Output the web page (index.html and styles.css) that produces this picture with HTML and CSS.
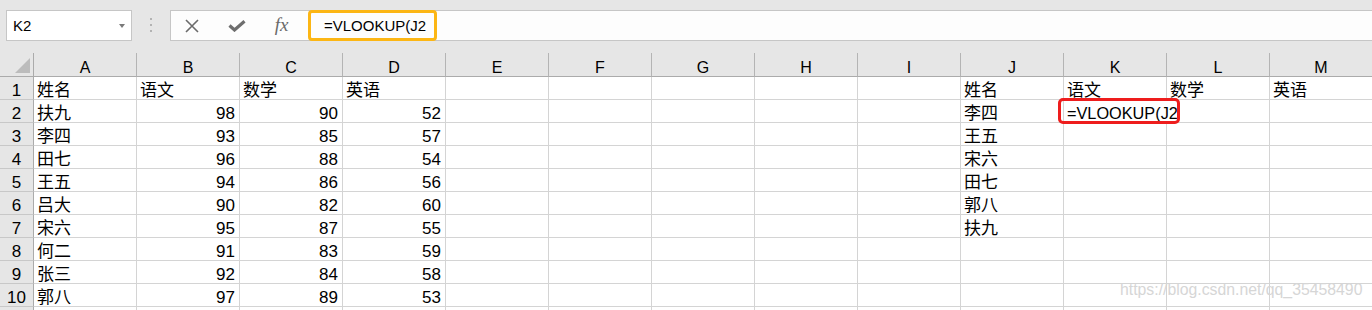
FILE: index.html
```html
<!DOCTYPE html>
<html>
<head>
	<meta charset="utf-8">
	<title>VLOOKUP</title>
	<link rel="stylesheet" href="styles.css">
</head>
<body>
	<div class="topbar">
		<div class="namebox"><span>K2</span><i class="caret"></i></div>
		<div class="grip"><i></i><i></i><i></i></div>
		<div class="fbar">
			<span class="fbtn">
				<svg width="14" height="14" viewBox="0 0 14 14"><path d="M1 1 L13 13 M13 1 L1 13" stroke="#6b6b6b" stroke-width="1.6" fill="none"/></svg>
			</span>
			<span class="fbtn">
				<svg width="18" height="12" viewBox="0 0 18 12"><path d="M1.5 5.5 L6.5 10 L16.5 1.2" stroke="#6e6e6e" stroke-width="3.2" fill="none"/></svg>
			</span>
			<span class="fbtn fx">fx</span>
			<span class="ftext">=VLOOKUP(J2</span>
		</div>
	</div>

	<div class="sheet">
		<div class="row head">
			<div class="corner"><i></i></div>
			<div>A</div><div>B</div><div>C</div><div>D</div><div>E</div><div>F</div><div>G</div>
			<div>H</div><div>I</div><div>J</div><div>K</div><div>L</div><div>M</div>
		</div>
		<div class="row">
			<div class="rh">1</div>
			<div>姓名</div><div>语文</div><div>数学</div><div>英语</div>
			<div></div><div></div><div></div><div></div><div></div>
			<div>姓名</div><div>语文</div><div>数学</div><div>英语</div>
		</div>
		<div class="row">
			<div class="rh">2</div>
			<div>扶九</div><div class="n">98</div><div class="n">90</div><div class="n">52</div>
			<div></div><div></div><div></div><div></div><div></div>
			<div>李四</div><div class="k2">=VLOOKUP(J2<span class="mark"></span></div><div></div><div></div>
		</div>
		<div class="row">
			<div class="rh">3</div>
			<div>李四</div><div class="n">93</div><div class="n">85</div><div class="n">57</div>
			<div></div><div></div><div></div><div></div><div></div>
			<div>王五</div><div></div><div></div><div></div>
		</div>
		<div class="row">
			<div class="rh">4</div>
			<div>田七</div><div class="n">96</div><div class="n">88</div><div class="n">54</div>
			<div></div><div></div><div></div><div></div><div></div>
			<div>宋六</div><div></div><div></div><div></div>
		</div>
		<div class="row">
			<div class="rh">5</div>
			<div>王五</div><div class="n">94</div><div class="n">86</div><div class="n">56</div>
			<div></div><div></div><div></div><div></div><div></div>
			<div>田七</div><div></div><div></div><div></div>
		</div>
		<div class="row">
			<div class="rh">6</div>
			<div>吕大</div><div class="n">90</div><div class="n">82</div><div class="n">60</div>
			<div></div><div></div><div></div><div></div><div></div>
			<div>郭八</div><div></div><div></div><div></div>
		</div>
		<div class="row">
			<div class="rh">7</div>
			<div>宋六</div><div class="n">95</div><div class="n">87</div><div class="n">55</div>
			<div></div><div></div><div></div><div></div><div></div>
			<div>扶九</div><div></div><div></div><div></div>
		</div>
		<div class="row">
			<div class="rh">8</div>
			<div>何二</div><div class="n">91</div><div class="n">83</div><div class="n">59</div>
			<div></div><div></div><div></div><div></div><div></div>
			<div></div><div></div><div></div><div></div>
		</div>
		<div class="row">
			<div class="rh">9</div>
			<div>张三</div><div class="n">92</div><div class="n">84</div><div class="n">58</div>
			<div></div><div></div><div></div><div></div><div></div>
			<div></div><div></div><div></div><div></div>
		</div>
		<div class="row">
			<div class="rh">10</div>
			<div>郭八</div><div class="n">97</div><div class="n">89</div><div class="n">53</div>
			<div></div><div></div><div></div><div></div><div></div>
			<div></div><div></div><div></div><div></div>
		</div>
		<div class="row">
			<div class="rh"></div>
			<div></div><div></div><div></div><div></div>
			<div></div><div></div><div></div><div></div><div></div>
			<div></div><div></div><div></div><div></div>
		</div>
	</div>

	<div class="watermark">https://blog.csdn.net/qq_35458490</div>
</body>
</html>
```

FILE: styles.css
```css
html, body {
	margin: 0;
	overflow: hidden;
	background-color: #fff;
	font-family: "Liberation Sans", "Noto Sans CJK SC", sans-serif;
	color: #000;
}

* {
	box-sizing: border-box;
}

/* formula bar */
.topbar {
	display: flex;
	align-items: flex-start;
	height: 53px;
	padding-top: 10px;
	background-color: #e6e6e6;
}

.namebox {
	display: flex;
	align-items: center;
	width: 126px;
	height: 31px;
	margin-left: 6px;
	padding-left: 6px;
	border: 1px solid #c6c6c6;
	background-color: #fff;
	font-size: 15px;
	line-height: 29px;
}

.namebox .caret {
	margin-left: auto;
	margin-right: 6px;
	border-left: 3.5px solid transparent;
	border-right: 3.5px solid transparent;
	border-top: 4px solid #7a7a7a;
}

.grip {
	display: flex;
	flex-direction: column;
	align-items: center;
	gap: 4px;
	width: 38px;
	padding-top: 8px;
}

.grip i {
	width: 2px;
	height: 2px;
	background-color: #b3b3b3;
}

.fbar {
	flex: 1;
	display: flex;
	align-items: flex-start;
	height: 31px;
	border: 1px solid #c6c6c6;
	border-right: none;
	background-color: #fdfdfd;
}

.fbtn {
	display: flex;
	align-items: center;
	justify-content: center;
	width: 45px;
	height: 29px;
}

.fbtn:first-child {
	margin-left: -2px;
}

.fx {
	font-family: "Liberation Serif", serif;
	font-style: italic;
	font-size: 19px;
	color: #6a6a6a;
	padding-bottom: 2px;
}

.ftext {
	width: 129px;
	height: 31px;
	margin-top: -1px;
	margin-left: 4px;
	padding: 1px 0 0 13px;
	border: 3px solid #fcb614;
	border-radius: 4px;
	font-size: 15px;
	line-height: 24px;
	white-space: nowrap;
}

/* sheet */
.row {
	display: grid;
	grid-template-columns: 34px repeat(13, 103px);
}

.row > div {
	height: 23px;
	padding: 5px 4px 0 3px;
	border-right: 1px solid #d4d4d4;
	border-bottom: 1px solid #d4d4d4;
	font-size: 17px;
	line-height: 17px;
	white-space: nowrap;
}

.row > .n {
	text-align: right;
}

.row > .rh {
	padding: 5px 0 0;
	text-align: center;
	background-color: #e6e6e6;
	border-right-color: #ababab;
	border-bottom-color: #c8c8c8;
}

.head > div {
	height: 24px;
	padding: 5px 0 0;
	text-align: center;
	background-color: #e6e6e6;
	border-right-color: #b4b4b4;
	border-bottom-color: #ababab;
	font-size: 16px;
	line-height: 20px;
}

.head > .corner {
	position: relative;
	border-right-color: #ababab;
}

.corner i {
	position: absolute;
	right: 3px;
	bottom: 3px;
	width: 15px;
	height: 15px;
	background-color: #bcbcbc;
	clip-path: polygon(100% 0, 100% 100%, 0 100%);
}

.row > .k2 {
	position: relative;
	border-right-color: transparent;
	font-size: 16.3px;
}

.mark {
	position: absolute;
	left: -6px;
	top: -2px;
	width: 122px;
	height: 26px;
	border: 3px solid #ee1d1d;
	border-radius: 5px;
}

.watermark {
	position: absolute;
	left: 1120px;
	top: 281px;
	font-size: 15.8px;
	color: #d6d6d6;
	white-space: nowrap;
}
```
